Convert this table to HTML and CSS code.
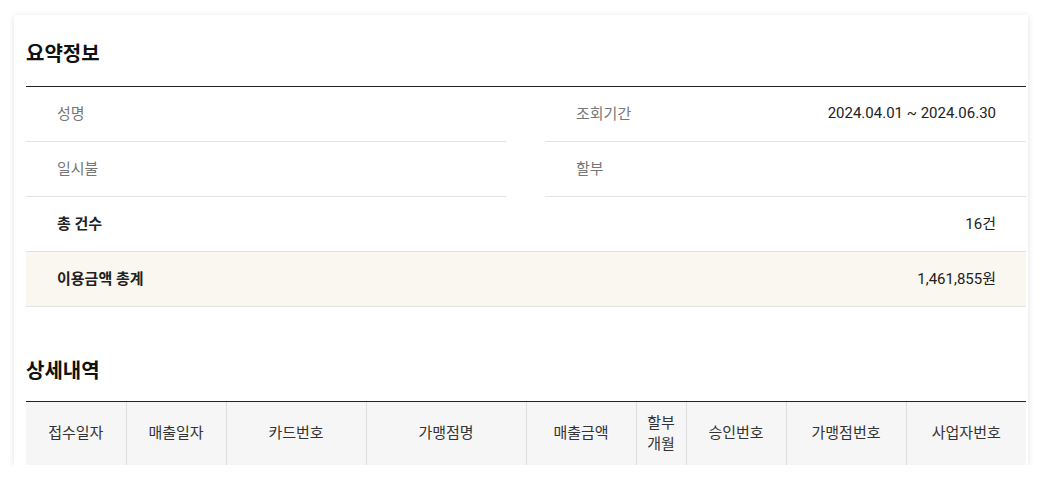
FILE: index.html
```html
<!DOCTYPE html>
<html lang="ko">
<head>
<meta charset="utf-8">
<link rel="stylesheet" href="styles.css">
</head>
<body>
<div class="card">
  <h2 class="title">요약정보</h2>
  <div class="summary">
    <div class="pair">
      <div class="row"><span class="label">성명</span><span class="value"></span></div>
      <div class="row"><span class="label">조회기간</span><span class="value">2024.04.01 ~ 2024.06.30</span></div>
    </div>
    <div class="pair">
      <div class="row"><span class="label">일시불</span><span class="value"></span></div>
      <div class="row"><span class="label">할부</span><span class="value"></span></div>
    </div>
    <div class="row full strong"><span class="label">총 건수</span><span class="value">16건</span></div>
    <div class="row full strong total"><span class="label">이용금액 총계</span><span class="value">1,461,855원</span></div>
  </div>
  <h2 class="title title-detail">상세내역</h2>
  <table class="detail">
    <thead>
      <tr>
        <th class="c1">접수일자</th>
        <th class="c2">매출일자</th>
        <th class="c3">카드번호</th>
        <th class="c4">가맹점명</th>
        <th class="c5">매출금액</th>
        <th class="c6">할부<br>개월</th>
        <th class="c7">승인번호</th>
        <th class="c8">가맹점번호</th>
        <th class="c9">사업자번호</th>
      </tr>
    </thead>
  </table>
</div>
</body>
</html>
```

FILE: styles.css
```css
* { box-sizing: border-box; }
html, body { margin: 0; padding: 0; background: #fff; }
body {
  font-family: Roboto, "Noto Sans CJK KR", sans-serif;
  color: #222;
  padding: 15px 16px 0 14px;
}
.card {
  width: 1014px;
  height: 450px;
  overflow: hidden;
  background: #fff;
  padding: 0 2px 0 12px;
  box-shadow: 0 1px 6px rgba(0, 0, 0, 0.12);
}
.title {
  margin: 0;
  height: 72px;
  padding-top: 25px;
  font-size: 20px;
  line-height: 28px;
  font-weight: 700;
  color: #111;
  border-bottom: 1px solid #222;
}
.title-detail {
  margin-top: 31px;
  height: 64px;
  padding-top: 19px;
}
.summary { display: flex; flex-direction: column; }
.pair {
  display: grid;
  grid-template-columns: 480px 481px;
  column-gap: 39px;
}
.row {
  display: flex;
  justify-content: space-between;
  align-items: center;
  height: 55px;
  padding: 0 30px 3px 31px;
  border-bottom: 1px solid #e3e3e3;
  font-size: 15px;
}
.label { color: #777; }
.value { color: #222; }
.strong .label { color: #222; font-weight: 700; }
.total { background: #faf6f0; }
.detail {
  width: 1000px;
  border-collapse: collapse;
  table-layout: fixed;
}
.detail th {
  height: 63px;
  background: #f6f6f6;
  border-right: 1px solid #dedede;
  font-weight: 400;
  font-size: 15px;
  line-height: 21px;
  color: #333;
  text-align: center;
  padding: 0;
}
.detail th:last-child { border-right: none; }
.c1 { width: 100px; }
.c2 { width: 100px; }
.c3 { width: 140px; }
.c4 { width: 160px; }
.c5 { width: 110px; }
.c6 { width: 50px; }
.c7 { width: 100px; }
.c8 { width: 120px; }
.c9 { width: 120px; }
```
